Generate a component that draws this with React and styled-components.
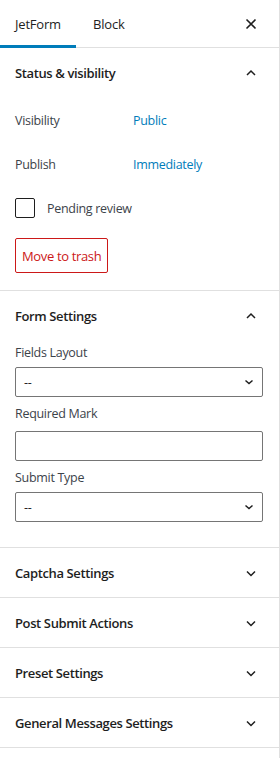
import React from "react";
import styled, {createGlobalStyle} from "styled-components";

const blue = '#007cba';
const border = '#e0e0e0';
const text = '#1e1e1e';

const GlobalStyle = createGlobalStyle`
  body {
    margin: 0;
    background: #fff;
    font-family: "Open Sans", "Noto Sans", sans-serif;
    color: ${text};
  }
`;

const Sidebar = styled.div`
  width: 280px;
  min-height: 758px;
  box-sizing: border-box;
  border-right: 1px solid ${border};
  background: #fff;
  font-size: 12.5px;
  letter-spacing: -0.3px;
`;

const Tabs = styled.div`
  display: flex;
  align-items: stretch;
  height: 48px;
  box-sizing: border-box;
  border-bottom: 1px solid ${border};
`;

const Tab = styled.div`
  display: flex;
  align-items: center;
  padding: 0 ${p => p.active ? '15px' : '17px'};
  margin-bottom: -1px;
  font-size: 13px;
  letter-spacing: -0.2px;
  color: ${text};
  box-shadow: ${p => p.active ? `inset 0 -3px 0 ${blue}` : 'none'};
  width: ${p => p.active ? '76px' : 'auto'};
  box-sizing: border-box;
`;

const CloseButton = styled.div`
  margin-left: auto;
  display: flex;
  align-items: center;
  padding-right: 22px;
`;

const Panel = styled.div`
  border-bottom: 1px solid ${border};
`;

const PanelHeader = styled.div`
  display: flex;
  align-items: center;
  justify-content: space-between;
  height: 49px;
  padding: 0 22px 0 15px;
  font-weight: 600;
  font-size: 13px;
  letter-spacing: -0.38px;
`;

const PanelBody = styled.div`
  padding: ${p => p.pad};
`;

const Row = styled.div`
  display: flex;
  align-items: center;
  height: 44px;
`;

const RowLabel = styled.div`
  width: 118px;
  color: #3c434a;
`;

const RowValue = styled.div`
  color: ${blue};
`;

const CheckRow = styled.label`
  display: flex;
  align-items: center;
  gap: 12px;
  margin-top: 12px;
  height: 20px;
  color: #3c434a;
`;

const Checkbox = styled.span`
  width: 20px;
  height: 20px;
  box-sizing: border-box;
  border: 1px solid #1e1e1e;
  border-radius: 2px;
  display: inline-block;
`;

const TrashButton = styled.div`
  display: inline-flex;
  align-items: center;
  height: 35px;
  box-sizing: border-box;
  margin-top: 20px;
  padding: 0 6px;
  border: 1px solid #cc1818;
  border-radius: 2px;
  color: #cc1818;
  font-size: 13px;
  letter-spacing: -0.35px;
`;

const Field = styled.div`
  margin-bottom: ${p => p.last ? '0' : '7px'};
`;

const FieldLabel = styled.div`
  color: #3c434a;
  height: 20px;
  line-height: 20px;
  margin-bottom: ${p => p.gap || '4px'};
`;

const SelectBox = styled.div`
  display: flex;
  align-items: center;
  justify-content: space-between;
  height: 30px;
  box-sizing: border-box;
  border: 1px solid #757575;
  border-radius: 2px;
  padding: 0 8px 0 8px;
  width: 248px;
  color: ${text};
`;

const Chevron = ({up}) => (
    <svg width="12" height="12" viewBox="0 0 12 12">
        <path d={up ? "M2 8 L6 4 L10 8" : "M2 4.5 L6 8.5 L10 4.5"} fill="none" stroke="#1e1e1e" strokeWidth="1.5"/>
    </svg>
);

const SmallChevron = () => (
    <svg width="10" height="8" viewBox="0 0 10 8">
        <path d="M1.5 2.5 L5 5.5 L8.5 2.5" fill="none" stroke="#1e1e1e" strokeWidth="1.5"/>
    </svg>
);

const CloseIcon = () => (
    <svg width="12" height="12" viewBox="0 0 12 12">
        <path d="M1.5 1.5 L10.5 10.5 M10.5 1.5 L1.5 10.5" fill="none" stroke="#1e1e1e" strokeWidth="1.6"/>
    </svg>
);

const CollapsedPanel = ({title}) => (
    <Panel>
        <PanelHeader>
            {title}
            <Chevron/>
        </PanelHeader>
    </Panel>
);

export default function App() {
    return <>
        <GlobalStyle/>
        <Sidebar>
            <Tabs>
                <Tab active>JetForm</Tab>
                <Tab>Block</Tab>
                <CloseButton><CloseIcon/></CloseButton>
            </Tabs>

            <Panel>
                <PanelHeader>
                    Status &amp; visibility
                    <Chevron up/>
                </PanelHeader>
                <PanelBody pad="1px 16px 17px 15px">
                    <Row>
                        <RowLabel>Visibility</RowLabel>
                        <RowValue>Public</RowValue>
                    </Row>
                    <Row>
                        <RowLabel>Publish</RowLabel>
                        <RowValue>Immediately</RowValue>
                    </Row>
                    <CheckRow>
                        <Checkbox/>
                        Pending review
                    </CheckRow>
                    <TrashButton>Move to trash</TrashButton>
                </PanelBody>
            </Panel>

            <Panel>
                <PanelHeader>
                    Form Settings
                    <Chevron up/>
                </PanelHeader>
                <PanelBody pad="3px 16px 25px 15px">
                    <Field>
                        <FieldLabel>Fields Layout</FieldLabel>
                        <SelectBox>--<SmallChevron/></SelectBox>
                    </Field>
                    <Field>
                        <FieldLabel gap="7px">Required Mark</FieldLabel>
                        <SelectBox/>
                    </Field>
                    <Field last>
                        <FieldLabel>Submit Type</FieldLabel>
                        <SelectBox>--<SmallChevron/></SelectBox>
                    </Field>
                </PanelBody>
            </Panel>

            <CollapsedPanel title="Captcha Settings"/>
            <CollapsedPanel title="Post Submit Actions"/>
            <CollapsedPanel title="Preset Settings"/>
            <CollapsedPanel title="General Messages Settings"/>
        </Sidebar>
    </>;
}
